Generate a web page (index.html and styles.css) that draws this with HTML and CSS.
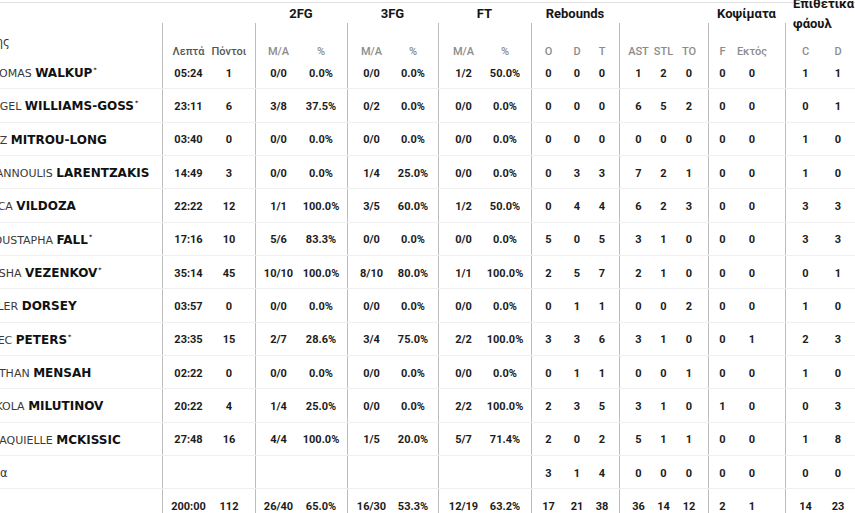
FILE: index.html
```html
<!DOCTYPE html>
<html lang="el">
<head>
<meta charset="utf-8">
<title>Box score</title>
<link rel="stylesheet" href="styles.css">
</head>
<body>
<div class="viewport">
  <div class="stats">
    <div class="groups">
      <div class="c name"></div>
      <div class="c g-min"></div>
      <div class="c g2">2FG</div>
      <div class="c g2">3FG</div>
      <div class="c g2">FT</div>
      <div class="c g3">Rebounds</div>
      <div class="c g3"></div>
      <div class="c g2">Κοψίματα</div>
      <div class="c g2 wrap"><span>Επιθετικά<br>φάουλ</span></div>
    </div>
    <div class="subs">
      <div class="c name"><span class="head-cut">Παίκτης</span></div>
      <div class="c dark">Λεπτά</div><div class="c dark">Πόντοι</div>
      <div class="c">M/A</div><div class="c">%</div>
      <div class="c">M/A</div><div class="c">%</div>
      <div class="c">M/A</div><div class="c">%</div>
      <div class="c">O</div><div class="c">D</div><div class="c">T</div>
      <div class="c">AST</div><div class="c">STL</div><div class="c">TO</div>
      <div class="c">F</div><div class="c">Εκτός</div>
      <div class="c">C</div><div class="c">D</div>
    </div>

    <div class="row">
      <div class="c name"><span>THOMAS <b>WALKUP<sup>*</sup></b></span></div>
      <div class="c">05:24</div><div class="c">1</div>
      <div class="c">0/0</div><div class="c">0.0%</div>
      <div class="c">0/0</div><div class="c">0.0%</div>
      <div class="c">1/2</div><div class="c">50.0%</div>
      <div class="c">0</div><div class="c">0</div><div class="c">0</div>
      <div class="c">1</div><div class="c">2</div><div class="c">0</div>
      <div class="c">0</div><div class="c">0</div>
      <div class="c">1</div><div class="c">1</div>
    </div>
    <div class="row">
      <div class="c name"><span>ANGEL <b>WILLIAMS-GOSS<sup>*</sup></b></span></div>
      <div class="c">23:11</div><div class="c">6</div>
      <div class="c">3/8</div><div class="c">37.5%</div>
      <div class="c">0/2</div><div class="c">0.0%</div>
      <div class="c">0/0</div><div class="c">0.0%</div>
      <div class="c">0</div><div class="c">0</div><div class="c">0</div>
      <div class="c">6</div><div class="c">5</div><div class="c">2</div>
      <div class="c">0</div><div class="c">0</div>
      <div class="c">0</div><div class="c">1</div>
    </div>
    <div class="row">
      <div class="c name"><span>NAZ <b>MITROU-LONG</b></span></div>
      <div class="c">03:40</div><div class="c">0</div>
      <div class="c">0/0</div><div class="c">0.0%</div>
      <div class="c">0/0</div><div class="c">0.0%</div>
      <div class="c">0/0</div><div class="c">0.0%</div>
      <div class="c">0</div><div class="c">0</div><div class="c">0</div>
      <div class="c">0</div><div class="c">0</div><div class="c">0</div>
      <div class="c">0</div><div class="c">0</div>
      <div class="c">1</div><div class="c">0</div>
    </div>
    <div class="row">
      <div class="c name"><span>GIANNOULIS <b>LARENTZAKIS</b></span></div>
      <div class="c">14:49</div><div class="c">3</div>
      <div class="c">0/0</div><div class="c">0.0%</div>
      <div class="c">1/4</div><div class="c">25.0%</div>
      <div class="c">0/0</div><div class="c">0.0%</div>
      <div class="c">0</div><div class="c">3</div><div class="c">3</div>
      <div class="c">7</div><div class="c">2</div><div class="c">1</div>
      <div class="c">0</div><div class="c">0</div>
      <div class="c">1</div><div class="c">0</div>
    </div>
    <div class="row">
      <div class="c name"><span>LUCA <b>VILDOZA</b></span></div>
      <div class="c">22:22</div><div class="c">12</div>
      <div class="c">1/1</div><div class="c">100.0%</div>
      <div class="c">3/5</div><div class="c">60.0%</div>
      <div class="c">1/2</div><div class="c">50.0%</div>
      <div class="c">0</div><div class="c">4</div><div class="c">4</div>
      <div class="c">6</div><div class="c">2</div><div class="c">3</div>
      <div class="c">0</div><div class="c">0</div>
      <div class="c">3</div><div class="c">3</div>
    </div>
    <div class="row">
      <div class="c name"><span>MOUSTAPHA <b>FALL<sup>*</sup></b></span></div>
      <div class="c">17:16</div><div class="c">10</div>
      <div class="c">5/6</div><div class="c">83.3%</div>
      <div class="c">0/0</div><div class="c">0.0%</div>
      <div class="c">0/0</div><div class="c">0.0%</div>
      <div class="c">5</div><div class="c">0</div><div class="c">5</div>
      <div class="c">3</div><div class="c">1</div><div class="c">0</div>
      <div class="c">0</div><div class="c">0</div>
      <div class="c">3</div><div class="c">3</div>
    </div>
    <div class="row">
      <div class="c name"><span>SASHA <b>VEZENKOV<sup>*</sup></b></span></div>
      <div class="c">35:14</div><div class="c">45</div>
      <div class="c">10/10</div><div class="c">100.0%</div>
      <div class="c">8/10</div><div class="c">80.0%</div>
      <div class="c">1/1</div><div class="c">100.0%</div>
      <div class="c">2</div><div class="c">5</div><div class="c">7</div>
      <div class="c">2</div><div class="c">1</div><div class="c">0</div>
      <div class="c">0</div><div class="c">0</div>
      <div class="c">0</div><div class="c">1</div>
    </div>
    <div class="row">
      <div class="c name"><span>TYLER <b>DORSEY</b></span></div>
      <div class="c">03:57</div><div class="c">0</div>
      <div class="c">0/0</div><div class="c">0.0%</div>
      <div class="c">0/0</div><div class="c">0.0%</div>
      <div class="c">0/0</div><div class="c">0.0%</div>
      <div class="c">0</div><div class="c">1</div><div class="c">1</div>
      <div class="c">0</div><div class="c">0</div><div class="c">2</div>
      <div class="c">0</div><div class="c">0</div>
      <div class="c">1</div><div class="c">0</div>
    </div>
    <div class="row">
      <div class="c name"><span>ALEC <b>PETERS<sup>*</sup></b></span></div>
      <div class="c">23:35</div><div class="c">15</div>
      <div class="c">2/7</div><div class="c">28.6%</div>
      <div class="c">3/4</div><div class="c">75.0%</div>
      <div class="c">2/2</div><div class="c">100.0%</div>
      <div class="c">3</div><div class="c">3</div><div class="c">6</div>
      <div class="c">3</div><div class="c">1</div><div class="c">0</div>
      <div class="c">0</div><div class="c">1</div>
      <div class="c">2</div><div class="c">3</div>
    </div>
    <div class="row">
      <div class="c name"><span>NATHAN <b>MENSAH</b></span></div>
      <div class="c">02:22</div><div class="c">0</div>
      <div class="c">0/0</div><div class="c">0.0%</div>
      <div class="c">0/0</div><div class="c">0.0%</div>
      <div class="c">0/0</div><div class="c">0.0%</div>
      <div class="c">0</div><div class="c">1</div><div class="c">1</div>
      <div class="c">0</div><div class="c">0</div><div class="c">1</div>
      <div class="c">0</div><div class="c">0</div>
      <div class="c">1</div><div class="c">0</div>
    </div>
    <div class="row">
      <div class="c name"><span>NIKOLA <b>MILUTINOV</b></span></div>
      <div class="c">20:22</div><div class="c">4</div>
      <div class="c">1/4</div><div class="c">25.0%</div>
      <div class="c">0/0</div><div class="c">0.0%</div>
      <div class="c">2/2</div><div class="c">100.0%</div>
      <div class="c">2</div><div class="c">3</div><div class="c">5</div>
      <div class="c">3</div><div class="c">1</div><div class="c">0</div>
      <div class="c">1</div><div class="c">0</div>
      <div class="c">0</div><div class="c">3</div>
    </div>
    <div class="row">
      <div class="c name"><span>SHAQUIELLE <b>MCKISSIC</b></span></div>
      <div class="c">27:48</div><div class="c">16</div>
      <div class="c">4/4</div><div class="c">100.0%</div>
      <div class="c">1/5</div><div class="c">20.0%</div>
      <div class="c">5/7</div><div class="c">71.4%</div>
      <div class="c">2</div><div class="c">0</div><div class="c">2</div>
      <div class="c">5</div><div class="c">1</div><div class="c">1</div>
      <div class="c">0</div><div class="c">0</div>
      <div class="c">1</div><div class="c">8</div>
    </div>
    <div class="row">
      <div class="c name"><span class="team-cut">Ομάδα</span></div>
      <div class="c"></div><div class="c"></div>
      <div class="c"></div><div class="c"></div>
      <div class="c"></div><div class="c"></div>
      <div class="c"></div><div class="c"></div>
      <div class="c">3</div><div class="c">1</div><div class="c">4</div>
      <div class="c">0</div><div class="c">0</div><div class="c">0</div>
      <div class="c">0</div><div class="c">0</div>
      <div class="c">0</div><div class="c">0</div>
    </div>
    <div class="row total">
      <div class="c name"></div>
      <div class="c">200:00</div><div class="c">112</div>
      <div class="c">26/40</div><div class="c">65.0%</div>
      <div class="c">16/30</div><div class="c">53.3%</div>
      <div class="c">12/19</div><div class="c">63.2%</div>
      <div class="c">17</div><div class="c">21</div><div class="c">38</div>
      <div class="c">36</div><div class="c">14</div><div class="c">12</div>
      <div class="c">2</div><div class="c">1</div>
      <div class="c">14</div><div class="c">23</div>
    </div>
  </div>
</div>
</body>
</html>
```
FILE: styles.css
```css
* { box-sizing: border-box; }
html, body { margin: 0; padding: 0; background: #fff; overflow: hidden; }
body { font-family: Roboto, "Noto Sans", sans-serif; color: #1c1c1c; }

.viewport { width: 855px; height: 513px; overflow: hidden; padding-top: 2px; }

.stats {
  width: 886px;
  margin-left: -16px;
  border-top: 1px solid #e0e0e0;
}

.groups, .subs, .row {
  display: grid;
  grid-template-columns: 178px 52px 41px 46px 46px 48px 43px 50px 43px 32px 28px 28px 32px 25px 32px 28px 49px 40px 45px;
}

.c {
  display: flex;
  align-items: center;
  justify-content: center;
  white-space: nowrap;
  min-width: 0;
}

/* group title row */
.groups { height: 20px; grid-template-rows: 20px; }
.groups .c { font-size: 13px; font-weight: 700; color: #151515; height: 20px; }
.groups .g-min, .groups .g2 { grid-column: span 2; }
.groups .g3 { grid-column: span 3; }
.groups .wrap {
  justify-content: flex-start;
  padding-left: 8px;
  padding-top: 2px;
  line-height: 20px;
}
.groups .wrap span { flex: none; }

/* sub header row */
.subs { height: 33px; grid-template-rows: 33px; }
.subs .c { font-size: 11px; font-weight: 500; color: #8c8c8c; padding-top: 25px; line-height: 12px; }
.subs .c.dark { color: #555; }
.subs .c.name { padding-top: 4px; }

/* data rows */
.row { height: 33.333px; border-bottom: 1px solid #efefef; }
.row .c { font-size: 11px; font-weight: 700; color: #1c1c1c; padding-top: 2px; }

/* name column */
.c.name {
  justify-content: flex-start;
  font-family: "DejaVu Sans", sans-serif;
  font-size: 11px;
  font-weight: 400;
  color: #3a3a3a;
}
.row .c.name { font-weight: 400; }
.c.name b { font-size: 12px; font-weight: 700; color: #111; }
.c.name sup { font-size: 6px; vertical-align: 5px; margin-left: 1px; line-height: 0; }
.head-cut { font-size: 11.5px; color: #333; margin-left: -22px; }
.team-cut { font-size: 11.5px; color: #333; margin-left: -15px; }

/* group dividers */
.subs > :nth-child(2), .row > :nth-child(2),
.subs > :nth-child(4), .row > :nth-child(4),
.subs > :nth-child(6), .row > :nth-child(6),
.subs > :nth-child(8), .row > :nth-child(8),
.subs > :nth-child(10), .row > :nth-child(10),
.subs > :nth-child(13), .row > :nth-child(13),
.subs > :nth-child(16), .row > :nth-child(16),
.subs > :nth-child(18), .row > :nth-child(18) {
  border-left: 1px solid #bdbdbd;
}

/* centring tweaks inside each column */
.subs > :nth-child(3), .row > :nth-child(3) { padding-right: 11px; }
.subs > :nth-child(5), .row > :nth-child(5) { padding-right: 6px; }
.subs > :nth-child(7), .row > :nth-child(7) { padding-right: 7px; }
.subs > :nth-child(9), .row > :nth-child(9) { padding-right: 9px; }
.subs > :nth-child(10), .row > :nth-child(10) { padding-left: 2px; }
.subs > :nth-child(12), .row > :nth-child(12) { padding-right: 6px; }
.subs > :nth-child(13), .row > :nth-child(13) { padding-left: 6px; }
.subs > :nth-child(15), .row > :nth-child(15) { padding-right: 6px; }
.subs > :nth-child(17), .row > :nth-child(17) { padding-right: 17px; }
.subs > :nth-child(19), .row > :nth-child(19) { padding-right: 19px; }
```
